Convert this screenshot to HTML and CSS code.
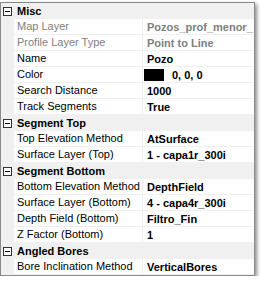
FILE: index.html
```html
<!DOCTYPE html>
<html lang="en">
<head>
    <meta charset="UTF-8">
    <title>Properties</title>
    <link rel="stylesheet" href="styles.css">
</head>
<body>
    <div class="grid">
        <div class="cat">
            <span class="toggle"><svg width="9" height="9" viewBox="0 0 9 9"><rect x="0.5" y="0.5" width="8" height="8" fill="#fff" stroke="#333"/><line x1="2" y1="4.5" x2="7" y2="4.5" stroke="#000"/></svg></span>
            <span class="cat-name">Misc</span>
        </div>
        <div class="row">
            <div class="gutter"></div>
            <div class="label dim">Map Layer</div>
            <div class="value dim">Pozos_prof_menor_</div>
        </div>
        <div class="row">
            <div class="gutter"></div>
            <div class="label dim">Profile Layer Type</div>
            <div class="value dim">Point to Line</div>
        </div>
        <div class="row">
            <div class="gutter"></div>
            <div class="label">Name</div>
            <div class="value">Pozo</div>
        </div>
        <div class="row">
            <div class="gutter"></div>
            <div class="label">Color</div>
            <div class="value"><span class="swatch"></span>0, 0, 0</div>
        </div>
        <div class="row">
            <div class="gutter"></div>
            <div class="label">Search Distance</div>
            <div class="value">1000</div>
        </div>
        <div class="row">
            <div class="gutter"></div>
            <div class="label">Track Segments</div>
            <div class="value">True</div>
        </div>

        <div class="cat">
            <span class="toggle"><svg width="9" height="9" viewBox="0 0 9 9"><rect x="0.5" y="0.5" width="8" height="8" fill="#fff" stroke="#333"/><line x1="2" y1="4.5" x2="7" y2="4.5" stroke="#000"/></svg></span>
            <span class="cat-name">Segment Top</span>
        </div>
        <div class="row">
            <div class="gutter"></div>
            <div class="label">Top Elevation Method</div>
            <div class="value">AtSurface</div>
        </div>
        <div class="row">
            <div class="gutter"></div>
            <div class="label">Surface Layer (Top)</div>
            <div class="value">1 - capa1r_300i</div>
        </div>

        <div class="cat">
            <span class="toggle"><svg width="9" height="9" viewBox="0 0 9 9"><rect x="0.5" y="0.5" width="8" height="8" fill="#fff" stroke="#333"/><line x1="2" y1="4.5" x2="7" y2="4.5" stroke="#000"/></svg></span>
            <span class="cat-name">Segment Bottom</span>
        </div>
        <div class="row">
            <div class="gutter"></div>
            <div class="label">Bottom Elevation Method</div>
            <div class="value">DepthField</div>
        </div>
        <div class="row">
            <div class="gutter"></div>
            <div class="label">Surface Layer (Bottom)</div>
            <div class="value">4 - capa4r_300i</div>
        </div>
        <div class="row">
            <div class="gutter"></div>
            <div class="label">Depth Field (Bottom)</div>
            <div class="value">Filtro_Fin</div>
        </div>
        <div class="row">
            <div class="gutter"></div>
            <div class="label">Z Factor (Bottom)</div>
            <div class="value">1</div>
        </div>

        <div class="cat">
            <span class="toggle"><svg width="9" height="9" viewBox="0 0 9 9"><rect x="0.5" y="0.5" width="8" height="8" fill="#fff" stroke="#333"/><line x1="2" y1="4.5" x2="7" y2="4.5" stroke="#000"/></svg></span>
            <span class="cat-name">Angled Bores</span>
        </div>
        <div class="row">
            <div class="gutter"></div>
            <div class="label">Bore Inclination Method</div>
            <div class="value">VerticalBores</div>
        </div>
    </div>
</body>
</html>
```

FILE: styles.css
```css
body {
    margin: 0;
    padding: 2px 0 0 0;
    background-color: #fff;
    font-family: 'Liberation Sans', Arial, sans-serif;
    font-size: 11px;
    color: #000;
}

.grid {
    width: 253px;
    border: 1px solid #8a8a8a;
    background-color: #fff;
    box-shadow: 2px 2px 4px rgba(0, 0, 0, 0.45);
    overflow: hidden;
}

.cat {
    display: flex;
    align-items: center;
    height: 16px;
    background-color: #f0f0f0;
    white-space: nowrap;
}

.toggle {
    display: flex;
    width: 9px;
    height: 9px;
    margin: 1px 5px 0 2px;
}

.cat-name {
    font-weight: bold;
}

.row {
    display: flex;
    height: 16px;
    white-space: nowrap;
}

.gutter {
    width: 13px;
    background-color: #f0f0f0;
}

.label {
    width: 125px;
    padding-left: 3px;
    line-height: 15px;
    border-bottom: 1px solid #f0f0f0;
    border-right: 1px solid #f0f0f0;
    overflow: hidden;
}

.value {
    flex: 1;
    display: flex;
    align-items: center;
    padding-left: 4px;
    height: 15px;
    border-bottom: 1px solid #f0f0f0;
    font-weight: bold;
    overflow: hidden;
}

.dim {
    color: #808080;
}

.swatch {
    display: inline-block;
    width: 20px;
    height: 12px;
    margin: 0 8px 0 -3px;
    background-color: #000;
}
```
